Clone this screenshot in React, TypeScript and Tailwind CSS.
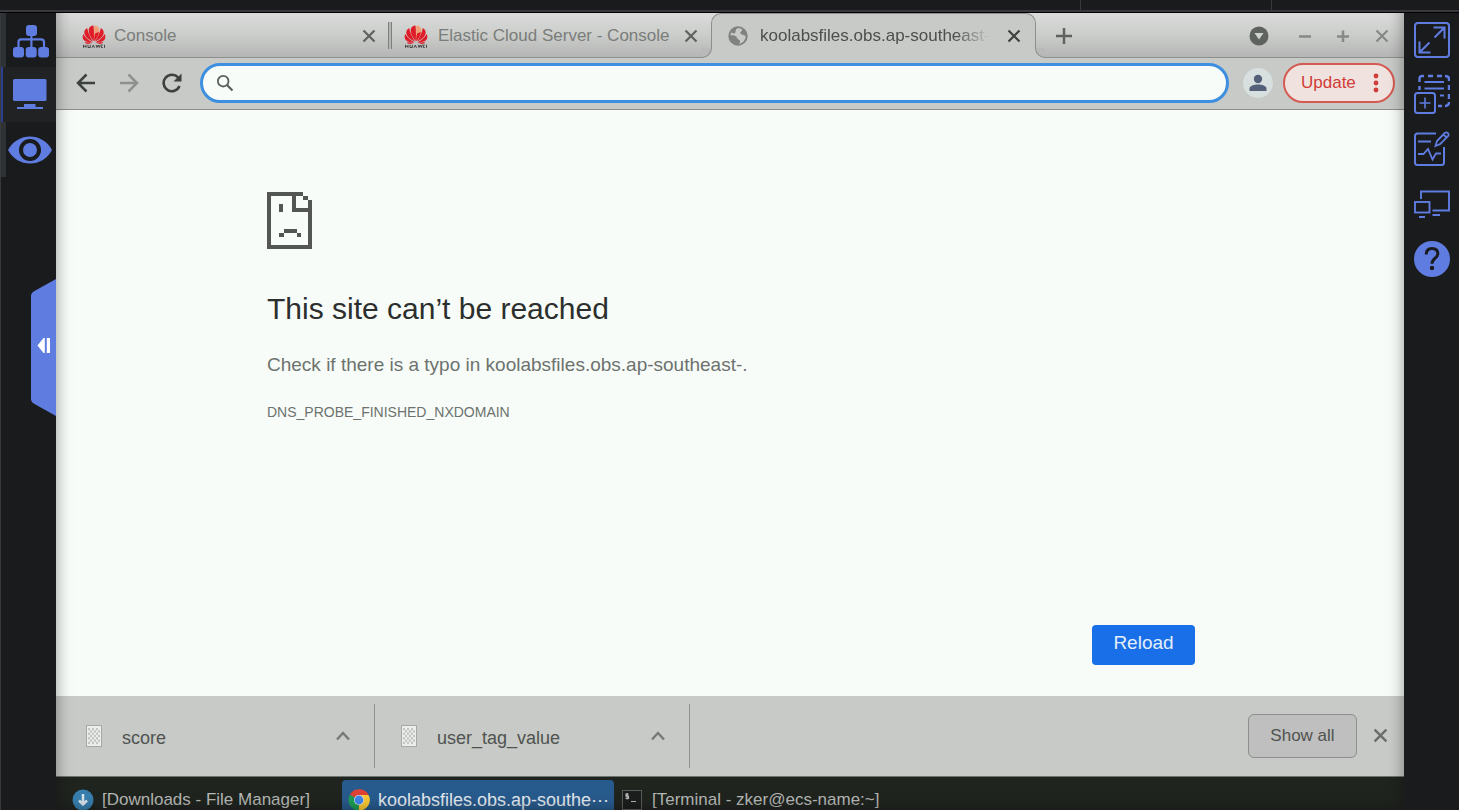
import React from "react";

function Cross({ className }: { className: string }) {
  return (
    <svg viewBox="0 0 14 14" className={className} fill="none" stroke="currentColor" strokeWidth="2.200">
      <path d="M1.500 1.500 L12.500 12.500 M12.500 1.500 L1.500 12.500" />
    </svg>
  );
}

function Petals() {
  return (
    <svg viewBox="0 0 24 24" className="size-6 shrink-0" aria-hidden="true">
      <g fill="#df1c28">
        <path d="M11.700 17.200 C8 13 6.200 8 6.800 5 C7.300 2.800 9.300 1.700 11.500 1.500 C12 6 12.100 12 11.700 17.200Z" />
        <path d="M12.300 17.200 C11.900 12 12 6 12.500 1.500 C14.700 1.700 16.700 2.800 17.200 5 C17.800 8 16 13 12.300 17.200Z" fill="#f2a077" />
        <path d="M12.300 17.200 C12 14.500 12.200 11 13.400 9.200 L17 8 C16.400 11.500 15 14.500 12.300 17.200Z" />
        <path d="M11 17.600 C6 15.500 2.600 12 2.300 9 C2.200 6.800 3.200 5 5.200 4 C6 8.500 8 13 11 17.600Z" />
        <path d="M13 17.600 C16 13 18 8.500 18.800 4 C20.800 5 21.800 6.800 21.700 9 C21.400 12 18 15.500 13 17.600Z" />
        <path d="M10.500 18.200 C5.500 18.500 2.400 17.300 1.200 15.200 C.5 13.500 .5 11.500 1.200 9.900 C3.500 13.500 6.500 16.300 10.500 18.200Z" />
        <path d="M13.500 18.200 C18.500 18.500 21.600 17.300 22.800 15.200 C23.500 13.500 23.500 11.500 22.800 9.900 C20.500 13.500 17.500 16.300 13.500 18.200Z" />
        <path d="M10.500 18.500 L2.800 18.300 C3.800 20.300 7 20.500 10.500 18.500Z M13.500 18.500 L21.200 18.300 C20.200 20.300 17 20.500 13.500 18.500Z" />
      </g>
      <path d="M1.500 20.800 V23.800 M4 20.800 V23.800 M1.500 22.300 H4 M6 20.800 V23.500 H8.300 V20.800 M10 23.800 L11.300 21 L12.500 23.800 M14 20.800 L15 23.500 L16.200 21 L17.300 23.500 L18.200 20.800 M20.800 21 H19.300 V23.500 H20.800 M22.500 20.800 V23.800" stroke="#4a4545" strokeWidth="1" fill="none" />
    </svg>
  );
}

function PageFile() {
  return (
    <svg viewBox="0 0 16 22" className="h-[22px] w-4 shrink-0" aria-hidden="true">
      <rect x=".5" y=".5" width="15" height="21" fill="#ebeeeb" stroke="#a6a9a6" />
      <g fill="#c2c5c2">
        {[0, 1, 2, 3, 4, 5, 6].map((r) =>
          [0, 1, 2].map((c) => (
            <rect key={`${r}-${c}`} x={2 + c * 4 + (r % 2) * 2} y={3 + r * 2.3} width="2" height="2.300" />
          ))
        )}
      </g>
    </svg>
  );
}

function Chrome() {
  return (
    <svg viewBox="0 0 22 22" className="size-[22px] shrink-0" aria-hidden="true">
      <path d="M11 11 L1.900 5.700 A10.500 10.500 0 0 1 20.500 6 Z" fill="#dc4236" />
      <path d="M11 11 L20.500 6 A10.500 10.500 0 0 1 10.500 21.500 Z" fill="#fbc934" />
      <path d="M11 11 L10.500 21.500 A10.500 10.500 0 0 1 1.900 5.700 Z" fill="#1f9d56" />
      <path d="M11 6 H20.500 L16 12Z" fill="#fbc934" />
      <path d="M11 6 H20.500 A10.500 10.500 0 0 0 11 .5Z" fill="#dc4236" />
      <circle cx="11" cy="11" r="5" fill="#e6edf0" />
      <circle cx="11" cy="11" r="4.400" fill="#4185ee" />
    </svg>
  );
}

function LeftRail() {
  return (
    <nav aria-label="Views" className="relative w-14 shrink-0 border-l border-[#37393b] bg-[#1a1b1d] text-[#5f7ce0]">
      <div className="flex flex-col">
        <button aria-label="Topology" className="flex h-[54px] items-center justify-center border-l-[5px] border-[#2e3234] pt-[2px]">
          <svg viewBox="0 0 36 33" className="h-[33px] w-9" fill="currentColor">
            <rect x="13" y="0" width="11" height="11" rx="3" />
            <rect x="0" y="22" width="11" height="10.500" rx="3" />
            <rect x="12.700" y="22" width="11" height="10.500" rx="3" />
            <rect x="25.200" y="22" width="11" height="10.500" rx="3" />
            <path d="M18.400 10 V22 M5.500 22 V17 Q5.500 14.300 8 14.300 H28 Q31 14.300 31 17 V22" fill="none" stroke="currentColor" strokeWidth="2.200" />
          </svg>
        </button>
        <button aria-label="Desktop" className="flex h-[55px] items-center border-l-2 border-[#2b3f8c] bg-[#212224] pl-[10px]">
          <svg viewBox="0 0 34 31" className="h-[31px] w-[34px]" fill="currentColor">
            <rect x="0" y="0" width="33.500" height="22" rx="1.500" />
            <path d="M11 25 H22.500 V28 H30 V30 H4 V28 H11Z" />
          </svg>
        </button>
        <button aria-label="Preview" className="flex h-[55px] items-center border-l-[5px] border-[#2e3234] pl-[2px]">
          <svg viewBox="0 0 44 28" className="h-7 w-11" fill="currentColor">
            <path d="M0 14 C5 5 13 .5 22 .5 C31 .5 39 5 44 14 C39 23 31 27.500 22 27.500 C13 27.500 5 23 0 14Z" />
            <circle cx="22" cy="14" r="9" fill="none" stroke="#1a1b1d" strokeWidth="4" />
          </svg>
        </button>
      </div>
      <button aria-label="Collapse panel" className="absolute top-[266px] right-0 h-[137px] w-[25px]">
        <svg viewBox="0 0 25 137" className="h-[137px] w-[25px]">
          <path d="M25 0 L3.500 12 Q0 14 0 17 V120 Q0 123 3.500 125 L25 137Z" fill="#5f7ce0" />
          <path d="M6.500 66.500 L12.500 59 H13.800 V74 H12.500Z M15.800 59 H19 V74 H15.800Z" fill="#fff" />
        </svg>
      </button>
    </nav>
  );
}

function RightRail() {
  return (
    <nav aria-label="Tools" className="w-[55px] shrink-0 bg-[#1a1b1d] text-[#5f7ce0]">
      <div className="flex flex-col items-center">
        <button aria-label="Full screen" className="flex h-[53px] items-center">
          <svg viewBox="0 0 36 36" className="size-9" fill="none" stroke="currentColor" strokeWidth="2">
            <rect x="1" y="1" width="34" height="34" rx="3" />
            <path d="M20.500 15.500 L30.500 5.500 M19.500 5.500 H30.500 V16.500 M15.500 20.500 L5.500 30.500 M5.500 19.500 V30.500 H16.500" />
          </svg>
        </button>
        <button aria-label="Add snippet" className="flex h-[55px] items-center">
          <svg viewBox="0 0 36 40" className="h-10 w-9" fill="none" stroke="currentColor" strokeWidth="2">
            <rect x="1" y="19" width="20" height="20" rx="2.500" />
            <path d="M11 23.500 V34.500 M5.500 29 H16.500" strokeWidth="1.600" />
            <path d="M5.500 16 V12 M5.500 8 V5 Q5.500 2 8.500 2 H10 M14 2 H19 M23 2 H28 M31 2 Q35 2 35 5 V7 M35 11 V16 M35 20 V25 M35 28 Q35 32 31 32 M28 32 H24" strokeWidth="2.400" />
            <path d="M10.500 8 H30 M10.500 14.500 H30 M26 21.500 H30" strokeWidth="2.200" />
          </svg>
        </button>
        <button aria-label="Edit report" className="flex h-[55px] items-center">
          <svg viewBox="0 0 36 36" className="size-9" fill="none" stroke="currentColor" strokeWidth="2">
            <path d="M22 2.500 H3.500 Q1 2.500 1 5 V31.500 Q1 34 3.500 34 H27.500 Q30 34 30 31.500 V16" />
            <path d="M4 10.500 H17 M4 23 H9.500 L14 18 L18.500 28.500 L22 22.500 H27" strokeWidth="1.800" />
            <path d="M21.500 15 L23 10 L31 1.800 Q32.500 .8 34 2.200 Q35.200 3.700 34 5.200 L26 13.200Z M29.500 3.500 L32.500 6.500" strokeWidth="1.800" />
          </svg>
        </button>
        <button aria-label="Switch screens" className="flex h-[55px] items-center">
          <svg viewBox="0 0 36 28" className="h-7 w-9" fill="none" stroke="currentColor" strokeWidth="1.900">
            <rect x="1" y="12" width="14.500" height="10.500" />
            <path d="M7 9 V1.500 H35 V20.500 H18.500 M18.500 25 H26 M5 27 H11" />
          </svg>
        </button>
        <button aria-label="Help" className="flex h-[55px] items-center">
          <svg viewBox="0 0 36 36" className="size-9">
            <circle cx="18" cy="18" r="18" fill="currentColor" />
            <path d="M12.200 13.500 Q12.200 7.500 18 7.500 Q23.800 7.500 23.800 12.700 Q23.800 15.200 20.800 17.500 Q18 19.700 18 22.800" fill="none" stroke="#1a1b1d" strokeWidth="3" />
            <circle cx="18" cy="27" r="2.200" fill="#1a1b1d" />
          </svg>
        </button>
      </div>
    </nav>
  );
}

function Tabs() {
  return (
    <div className="flex h-[45px] shrink-0 border-b border-[#8c8f8c] bg-linear-to-b from-[#dadbda] via-[#cbcdcb] to-[#b4b5b4] pt-px text-[17px] text-[#7a7d7a]">
      <div className="flex w-[332px] items-center pr-3 pl-[26px]">
        <Petals />
        <span className="ml-2 flex-1">Console</span>
        <button aria-label="Close Console" className="text-[#5f625f]"><Cross className="size-[14px]" /></button>
      </div>
      <div className="my-auto h-[27px] w-1 border-x border-[#7c7f7c] bg-[#b4b6b4]" />
      <div className="flex w-[319px] items-center pr-[13px] pl-3">
        <Petals />
        <span className="ml-[10px] flex-1 whitespace-nowrap">Elastic Cloud Server - Console</span>
        <button aria-label="Close Elastic Cloud Server" className="text-[#5f625f]"><Cross className="size-[14px]" /></button>
      </div>
      <div className="relative -mt-px -mb-px flex w-[325px] items-center rounded-t-[10px] border border-b-0 border-[#8c8f8c] bg-[#c7cac6] pr-[14px] pl-4">
        <span className="absolute bottom-0 -left-[10px] size-[10px] bg-[#c7cac6]">
          <span className="block size-[10px] rounded-br-[10px] border-r border-b border-[#8c8f8c] bg-[#b8b9b8]" />
        </span>
        <span className="absolute -right-[10px] bottom-0 size-[10px] bg-[#c7cac6]">
          <span className="block size-[10px] rounded-bl-[10px] border-b border-l border-[#8c8f8c] bg-[#b8b9b8]" />
        </span>
        <svg viewBox="0 0 20 20" className="size-5 shrink-0">
          <circle cx="10" cy="10" r="9.700" fill="#7f827f" />
          <path d="M9 2.500 C12 1.500 15 2.800 14 4.500 C13.300 6 11.500 6 12.500 7.500 C13.300 8.700 15.500 8.500 17.700 10 C17.500 14 15 17.200 11 17.700 C12.500 15.800 12.500 14.500 10.500 13.500 C8.500 12.800 9.500 11 7.500 10 C5.500 9.300 4 9.800 2.400 9.300 C2.700 7.800 3.200 6.800 3.800 6.200 C5 7.800 7 8 7.500 6 C7.800 4.800 7.500 3.500 9 2.500Z" fill="#c7cac6" />
        </svg>
        <span className="ml-3 whitespace-nowrap text-[#4c4f4c] mask-r-from-85%">koolabsfiles.obs.ap-southeast-</span>
        <button aria-label="Close tab" className="ml-auto text-[#3d403d]"><Cross className="size-[14px]" /></button>
      </div>
      <button aria-label="New tab" className="ml-5 text-[#5f625f]">
        <svg viewBox="0 0 16 16" className="size-4" stroke="currentColor" strokeWidth="2.500"><path d="M8 0 V16 M0 8 H16" /></svg>
      </button>
      <div className="ml-auto flex items-center pr-[15px] text-[#868986]">
        <button aria-label="Tab search">
          <svg viewBox="0 0 20 20" className="size-5"><circle cx="10" cy="10" r="9.500" fill="#5e635f" /><path d="M5.500 7 H14.500 L10 13.500Z" fill="#cfd2cf" /></svg>
        </button>
        <button aria-label="Minimize" className="ml-[30px]">
          <svg viewBox="0 0 12 12" className="size-3" stroke="currentColor" strokeWidth="2.500"><path d="M0 6.500 H12" /></svg>
        </button>
        <button aria-label="Maximize" className="ml-[26px]">
          <svg viewBox="0 0 12 12" className="size-3" stroke="currentColor" strokeWidth="2.500"><path d="M0 6.500 H12 M6 .5 V12" /></svg>
        </button>
        <button aria-label="Close window" className="ml-[26px]"><Cross className="size-[14px]" /></button>
      </div>
    </div>
  );
}

function Toolbar() {
  return (
    <div className="flex h-[52px] shrink-0 items-center border-b border-[#8c8f8c] bg-[#c7cac6] pr-[9px] pb-px pl-5 text-[#3d413e]">
      <button aria-label="Back">
        <svg viewBox="0 0 20 20" className="size-5" fill="none" stroke="currentColor" strokeWidth="2.500"><path d="M19 10 H2.500 M10.500 1.500 L2 10 L10.500 18.500" /></svg>
      </button>
      <button aria-label="Forward" className="ml-[23px] text-[#8e918e]">
        <svg viewBox="0 0 20 20" className="size-5" fill="none" stroke="currentColor" strokeWidth="2.500"><path d="M1 10 H17.500 M9.500 1.500 L18 10 L9.500 18.500" /></svg>
      </button>
      <button aria-label="Reload page" className="ml-[23px]">
        <svg viewBox="0 0 20 20" className="size-5" fill="none" stroke="currentColor" strokeWidth="2.600"><path d="M17.500 13 A8.200 8.200 0 1 1 16 4.500" /><path d="M19.500 .5 V8.500 H11.500Z" fill="currentColor" stroke="none" /></svg>
      </button>
      <label className="ml-[18px] flex h-10 flex-1 items-center rounded-full border-[3px] border-[#3e8fe0] bg-[#f7fcf8] px-[13px] text-[#5c605d]">
        <svg viewBox="0 0 18 18" className="size-[18px] shrink-0" fill="none" stroke="currentColor" strokeWidth="1.800"><circle cx="7.200" cy="7.200" r="5.300" /><path d="M11 11 L16.500 16.500" strokeWidth="2.200" /></svg>
        <input aria-label="Address" className="ml-3 min-w-0 flex-1 bg-transparent text-lg outline-none" />
      </label>
      <button aria-label="Profile" className="ml-[14px] flex size-[30px] items-center justify-center rounded-full bg-[#d8dfdf]">
        <svg viewBox="0 0 18 18" className="size-[18px]" fill="#536078"><circle cx="9" cy="5" r="4.200" /><path d="M.5 17 V14.500 C.5 12 5 10.500 9 10.500 C13 10.500 17.500 12 17.500 14.500 V17Z" /></svg>
      </button>
      <button className="ml-[10px] flex h-10 w-[112px] items-center justify-between rounded-full border-2 border-[#d65a54] bg-[#f0e3df] pr-[14px] pl-4 text-[17px] text-[#d03c37]">
        Update
        <svg viewBox="0 0 6 20" className="h-5 w-[6px]" fill="currentColor"><circle cx="3" cy="3" r="2.400" /><circle cx="3" cy="10" r="2.400" /><circle cx="3" cy="17" r="2.400" /></svg>
      </button>
    </div>
  );
}

function ErrorPage() {
  return (
    <main className="flex flex-1 flex-col bg-[#f7fcf8] pt-[82px] pr-[209px] pl-[211px] text-[#6d726e]">
      <svg viewBox="0 0 45 57" className="h-[57px] w-[45px]" fill="#545654" aria-hidden="true">
        <path d="M0 0 H36 V4 H29 V16 H41 V8 H45 V57 H0Z M4 4 V53 H41 V20 H25 V4Z" fillRule="evenodd" />
        <path d="M36 4 H41 V8 H36Z M12 12 H16 V20 H12Z M17 37 H30 V41 H17Z M12 41 H17 V45 H12Z M30 41 H34 V45 H30Z" />
      </svg>
      <h1 className="mt-10 text-3xl leading-10 text-[#2c2f2d]">This site can’t be reached</h1>
      <p className="mt-6 text-[19px] leading-6">Check if there is a typo in koolabsfiles.obs.ap-southeast-.</p>
      <p className="mt-[23px] text-sm leading-6">DNS_PROBE_FINISHED_NXDOMAIN</p>
      <button className="mt-auto mb-[31px] h-10 w-[103px] self-end rounded bg-[#196fe7] pb-[3px] text-[19px] text-[#e3eef8]">Reload</button>
    </main>
  );
}

function Download({ name }: { name: string }) {
  return (
    <div className="my-2 flex w-[315px] items-center border-r border-[#8f928f] pr-6 pl-[26px] first:w-[319px] first:pl-[30px]">
      <PageFile />
      <span className="ml-5 flex-1 pt-[3px] text-lg">{name}</span>
      <button aria-label={`Options for ${name}`} className="text-[#777a77]">
        <svg viewBox="0 0 14 10" className="h-[10px] w-[14px]" fill="none" stroke="currentColor" strokeWidth="2.500"><path d="M1 8.500 L7 2 L13 8.500" /></svg>
      </button>
    </div>
  );
}

function Downloads() {
  return (
    <div className="flex h-[81px] shrink-0 border-b border-[#6e716e] bg-[#c7cac6] pr-4 text-[#505350]">
      <Download name="score" />
      <Download name="user_tag_value" />
      <div className="ml-auto flex items-center gap-4 pb-px">
        <button className="h-11 w-[109px] rounded-md border border-[#8c8f8b] bg-[#bfbfbf] text-[17px]">Show all</button>
        <button aria-label="Close downloads" className="text-[#6a6d6a]"><Cross className="size-[15px]" /></button>
      </div>
    </div>
  );
}

function Taskbar() {
  return (
    <div className="flex h-[33px] shrink-0 items-start overflow-hidden bg-[#20241f] pt-[3px] text-[17px] whitespace-nowrap text-[#b5b8b5]">
      <button className="flex h-10 w-[286px] items-center gap-2 pl-4">
        <svg viewBox="0 0 22 22" className="size-[22px] shrink-0"><circle cx="11" cy="11" r="10.500" fill="#397fae" /><path d="M11 5 V15 M7 11.500 L11 15.500 L15 11.500" fill="none" stroke="#d9e6eb" strokeWidth="2.500" /></svg>
        [Downloads - File Manager]
      </button>
      <button className="flex h-10 w-[272px] items-center gap-2 rounded-t-sm bg-[#285b8d] pl-[6px] text-lg text-[#e2e9ee]">
        <Chrome />
        koolabsfiles.obs.ap-southe⋯
      </button>
      <button className="flex h-10 items-center gap-[10px] pl-2">
        <svg viewBox="0 0 20 20" className="size-5 shrink-0" fill="none"><rect x=".5" y=".5" width="19" height="19" fill="#1c1e1d" stroke="#5b5d5c" /><path d="M6.500 4.200 H4 V6.200 H6.500 V8.300 H3.500 M5.200 3 V9.500 M9 11.500 H14" stroke="#b5b8b5" strokeWidth="1.200" /></svg>
        [Terminal - zker@ecs-name:~]
      </button>
    </div>
  );
}

export default function App() {
  return (
    <div className="flex h-screen flex-col overflow-hidden bg-[#1a1b1d] font-['Liberation_Sans',Arial,sans-serif]">
      <header className="flex h-[13px] shrink-0 justify-end border-b border-black bg-[#1a1b1d]">
        <div className="flex flex-1 justify-end border-b-2 border-[#3a383e] pr-[187px]">
          <div className="w-48 border-x border-[#3a383e]" />
        </div>
      </header>
      <div className="flex min-h-0 flex-1">
        <LeftRail />
        <section aria-label="Remote desktop" className="relative flex min-w-0 flex-1 flex-col overflow-hidden">
          <Tabs />
          <Toolbar />
          <ErrorPage />
          <Downloads />
          <Taskbar />
          <div className="pointer-events-none absolute inset-x-0 -top-5 bottom-0 shadow-[inset_0_0_16px_rgba(0,0,0,0.4)]" />
        </section>
        <RightRail />
      </div>
    </div>
  );
}
